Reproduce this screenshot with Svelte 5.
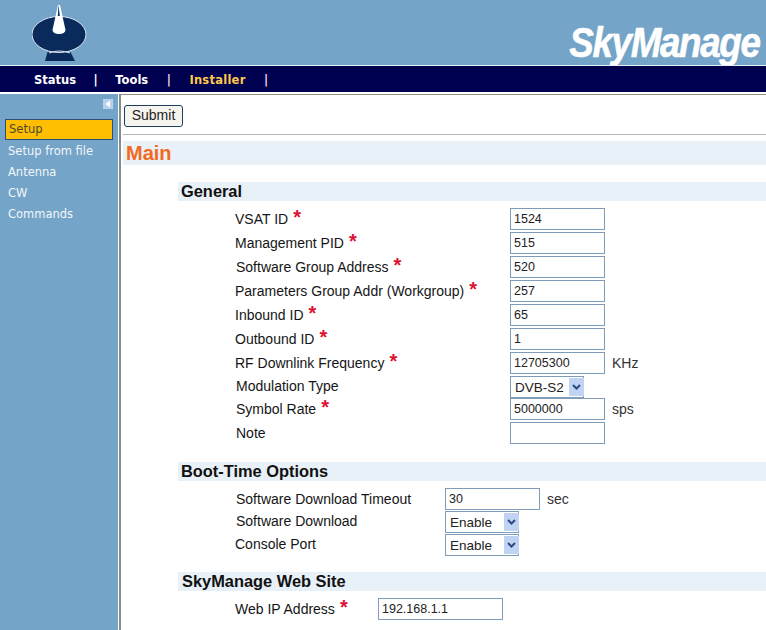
<script>
    const generalRows = [
        { label: "VSAT ID", req: true, value: "1524", off: 0 },
        { label: "Management PID", req: true, value: "515", off: 0 },
        { label: "Software Group Address", req: true, value: "520", off: 1 },
        { label: "Parameters Group Addr (Workgroup)", req: true, value: "257", off: 0 },
        { label: "Inbound ID", req: true, value: "65", off: 0 },
        { label: "Outbound ID", req: true, value: "1", off: 0 },
        { label: "RF Downlink Frequency", req: true, value: "12705300", unit: "KHz", off: 0 },
        { label: "Modulation Type", select: "DVB-S2", off: 1 },
        { label: "Symbol Rate", req: true, value: "5000000", unit: "sps", off: 1 },
        { label: "Note", value: "", off: 1 }
    ];
    const bootRows = [
        { label: "Software Download Timeout", value: "30", unit: "sec", off: 1 },
        { label: "Software Download", select: "Enable", off: 1 },
        { label: "Console Port", select: "Enable", off: 0 }
    ];
    const sideItems = ["Setup", "Setup from file", "Antenna", "CW", "Commands"];
    const navItems = ["Status", "Tools", "Installer"];
</script>

{#snippet formRow(row)}
    <div class="row" class:select-row={row.select}>
        <div class="label" class:shift={row.off}>
            {row.label}{#if row.req}<span class="req">*</span>{/if}
        </div>
        <div class="field">
            {#if row.select}
                <div class="select-wrap">
                    <select class="select">
                        <option>{row.select}</option>
                    </select>
                    <span class="arrow">
                        <svg width="9" height="6" viewBox="0 0 9 6"><path d="M1 1 L4.500 4.500 L8 1" fill="none" stroke="#2c4a80" stroke-width="2"/></svg>
                    </span>
                </div>
            {:else}
                <input class="text" type="text" value={row.value} />
            {/if}
            {#if row.unit}<span class="unit">{row.unit}</span>{/if}
        </div>
    </div>
{/snippet}

<div class="page">
    <header class="top">
        <svg class="logo" width="64" height="64" viewBox="0 0 64 64">
            <path d="M13 61 L15.500 52 L38.500 52 L43 61 Z" fill="#0b2a5c"/>
            <ellipse cx="27" cy="34.500" rx="27" ry="18" fill="#0b2a5c" stroke="#dce8f2" stroke-width="1"/>
            <path d="M17 53 Q27 49 38 53" fill="none" stroke="#dce8f2" stroke-width="1"/>
            <path d="M26 5 L28 5 L33.500 30 Q33 34 27 34 Q21 34 20.500 30 Z" fill="#fff"/>
            <path d="M26.500 5 L25.800 16 L27.800 16 Z" fill="#0b2a5c"/>
        </svg>
        <div class="brand">SkyManage</div>
    </header>

    <nav class="nav">
        {#each navItems as item, i}
            <span class="nav-item" class:current={item === "Installer"}>{item}</span>
            <span class="sep" class:pink={i > 0}>|</span>
        {/each}
    </nav>

    <div class="body">
        <aside class="side">
            <div class="collapse">
                <svg width="10" height="10" viewBox="0 0 10 10">
                    <rect width="10" height="10" fill="#b9d0ee"/>
                    <path d="M7 1.500 L2.500 5 L7 8.500 Z" fill="#fff"/>
                </svg>
            </div>
            {#each sideItems as item, i}
                <div class="side-item" class:active={i === 0}>{item}</div>
            {/each}
        </aside>

        <main class="main">
            <div class="toolbar">
                <button class="submit">Submit</button>
            </div>
            <h1 class="title">Main</h1>

            <section class="group first">
                <h2>General</h2>
                <div class="rows general">
                    {#each generalRows as row}
                        {@render formRow(row)}
                    {/each}
                </div>
            </section>

            <section class="group">
                <h2>Boot-Time Options</h2>
                <div class="rows boot">
                    {#each bootRows as row}
                        {@render formRow(row)}
                    {/each}
                </div>
            </section>

            <section class="group">
                <h2 class="web-head">SkyManage Web Site</h2>
                <div class="rows web">
                    {@render formRow({ label: "Web IP Address", req: true, value: "192.168.1.1" })}
                </div>
            </section>
        </main>
    </div>
</div>

<style>
    :global(body) {
        margin: 0;
        background: #fff;
        overflow: hidden;
    }

    .page {
        width: 766px;
        height: 630px;
        overflow: hidden;
        font-family: "Liberation Sans", Arial, sans-serif;
        display: flex;
        flex-direction: column;
    }

    .top {
        height: 65px;
        background: #74a4c7;
        display: flex;
        justify-content: space-between;
        align-items: flex-start;
        padding: 0 6px 0 32px;
        border-bottom: 1px solid #e8eef2;
        overflow: hidden;
    }

    .logo {
        display: block;
    }

    .brand {
        color: #fff;
        font-weight: bold;
        font-style: italic;
        font-size: 42px;
        line-height: 48px;
        letter-spacing: -1.500px;
        margin-top: 19px;
        transform: scaleX(0.875);
        transform-origin: right center;
        -webkit-text-stroke: 0.6px #fff;
    }

    .nav {
        height: 25px;
        background: #000050;
        display: flex;
        align-items: center;
        padding: 1px 0 0 34px;
        box-sizing: content-box;
        font-family: "DejaVu Sans", Verdana, sans-serif;
        font-size: 11.500px;
        font-weight: bold;
        color: #fff;
        border-bottom: 3px solid #fff;
        margin-bottom: -1px;
    }

    .nav-item.current {
        color: #ffc94a;
        letter-spacing: 0.250px;
    }

    .sep {
        margin: 0 17.500px;
    }

    .sep.pink {
        margin: 0 18.500px;
        color: #f4d4ec;
    }

    .body {
        flex: 1;
        display: flex;
        min-height: 0;
    }

    .side {
        width: 118px;
        background: #74a4c7;
        flex: none;
        font-family: "DejaVu Sans", Verdana, sans-serif;
        font-size: 11.500px;
        color: #f2f6fa;
    }

    .collapse {
        height: 24px;
        display: flex;
        justify-content: flex-end;
        padding: 5px 5px 0 0;
        box-sizing: border-box;
    }

    .collapse svg {
        display: block;
    }

    .side-item {
        height: 21px;
        line-height: 21px;
        padding-left: 8px;
    }

    .side-item.active {
        background: #ffbe00;
        color: #4a4a30;
        border: 1px solid #2d4f78;
        height: 19px;
        line-height: 19px;
        margin: 1px 5px 1px 5px;
        padding-left: 3px;
    }

    .main {
        flex: 1;
        margin-left: 1px;
        border-top: 1px solid #8f8f80;
        border-left: 2px solid #7f8f90;
        min-width: 0;
    }

    .toolbar {
        height: 40px;
        margin-left: 2px;
        padding: 10px 0 0 1px;
        box-sizing: border-box;
        border-bottom: 1px solid #b8b8b0;
    }

    .submit {
        display: block;
        width: 59px;
        height: 22px;
        padding: 0 0 2px;
        background: #f6f4ee;
        border: 1px solid #1c4060;
        border-radius: 3px;
        font-family: inherit;
        font-size: 14px;
        color: #222;
    }

    .title {
        margin: 6px 0 0 2px;
        height: 24px;
        line-height: 24px;
        background: #e8f0f8;
        padding-left: 3px;
        font-size: 20px;
        font-weight: bold;
        color: #f26a21;
    }

    .group.first {
        margin-top: 17px;
    }

    .group h2 {
        margin: 0 0 0 57px;
        height: 19px;
        line-height: 19px;
        background: #e8f0f8;
        padding-left: 3px;
        font-size: 16.400px;
        font-weight: bold;
        color: #111;
    }

    .group h2.web-head {
        padding-left: 4px;
    }

    .rows {
        display: flex;
        flex-direction: column;
        padding-top: 7px;
    }

    .general {
        padding-bottom: 16px;
        --label-w: 275px;
    }

    .boot {
        padding-bottom: 17px;
        --label-w: 210px;
    }

    .web {
        --label-w: 143px;
    }

    .row {
        display: flex;
        height: 24px;
        align-items: flex-start;
        padding-left: 114px;
    }

    .row.select-row {
        height: 22px;
    }

    .boot .row {
        height: 23px;
    }

    .boot .row:last-child {
        height: 21px;
    }

    .label {
        width: var(--label-w);
        flex: none;
        height: 22px;
        line-height: 22px;
        font-size: 14px;
        color: #151515;
    }

    .select-row .label {
        line-height: 21px;
    }

    .label.shift {
        padding-left: 1px;
        width: calc(var(--label-w) - 1px);
    }

    .req {
        color: #dc1030;
        font-size: 20px;
        font-weight: bold;
        line-height: 14px;
        margin-left: 5px;
    }

    .field {
        display: flex;
        align-items: center;
        height: 22px;
    }

    .text {
        width: 95px;
        height: 22px;
        box-sizing: border-box;
        padding: 0 3px;
        border: 1px solid #7f9db9;
        background: #fff;
        font-family: inherit;
        font-size: 12.500px;
        color: #222;
    }

    .web .text {
        width: 125px;
    }

    .unit {
        margin-left: 7px;
        font-size: 14px;
        color: #333;
    }

    .select-wrap {
        position: relative;
    }

    .select {
        display: block;
        appearance: none;
        width: 74px;
        height: 22px;
        box-sizing: border-box;
        padding: 0 18px 0 4px;
        border: 1px solid #7f9db9;
        border-radius: 0;
        background: #fff;
        font-family: inherit;
        font-size: 13.500px;
        color: #222;
    }

    .arrow {
        position: absolute;
        top: 2px;
        right: 0;
        width: 15px;
        height: 18px;
        background: #c1d3f2;
        display: flex;
        align-items: center;
        justify-content: center;
    }
</style>
